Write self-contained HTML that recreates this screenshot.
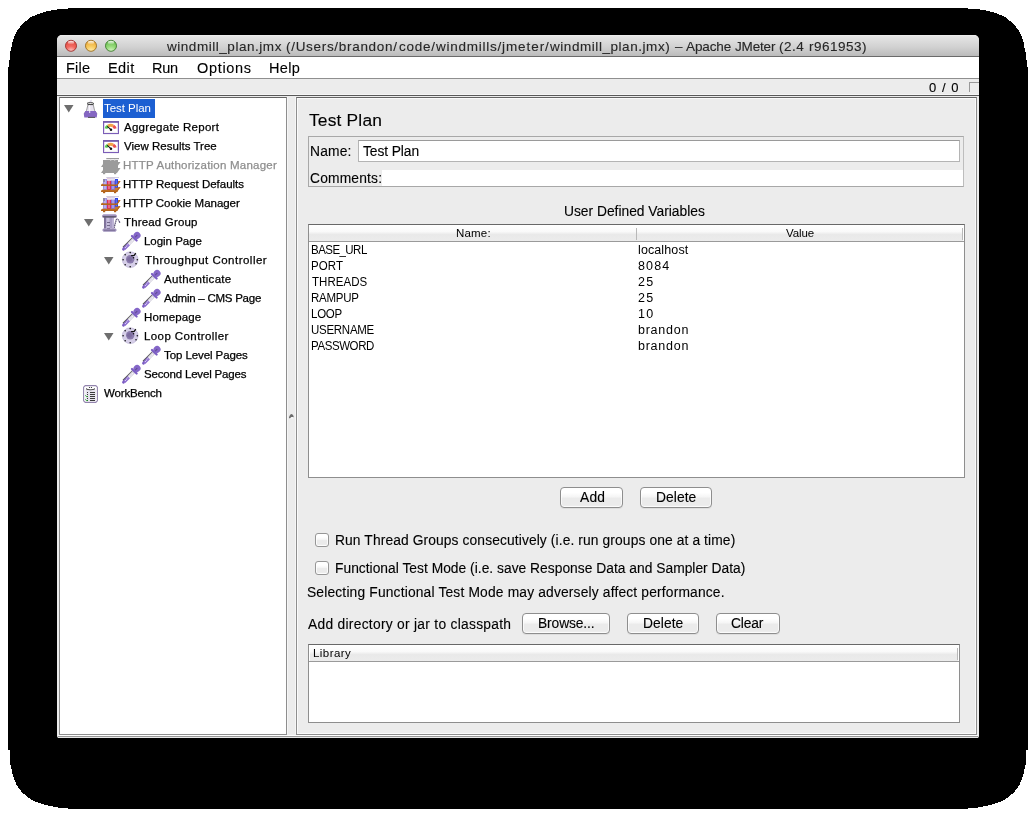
<!DOCTYPE html>
<html><head><meta charset="utf-8">
<style>
*{margin:0;padding:0;box-sizing:border-box}
html,body{width:1036px;height:817px;overflow:hidden;background:#fff;font-family:"Liberation Sans",sans-serif;color:#000}
.a{position:absolute;white-space:nowrap;will-change:transform;-webkit-text-stroke:0.25px currentColor}
.b{position:absolute}
.btn{position:absolute;border:1px solid #8e8e8e;border-radius:4px;background:linear-gradient(#fff,#fff 25%,#f6f6f6 45%,#ebebeb 55%,#ebebeb 90%,#f4f4f4);box-shadow:0 1px 0.5px rgba(0,0,0,0.06), inset 0 0 0 1px rgba(255,255,255,0.7)}
.cb{position:absolute;width:14px;height:14px;border:1px solid #969696;border-radius:3px;background:linear-gradient(#fff,#fff 25%,#f6f6f6 45%,#ebebeb 55%,#ebebeb 85%,#f6f6f6);box-shadow:inset 0 0 0 1px rgba(255,255,255,0.8)}
</style></head><body>
<svg class="b" style="left:0;top:0" width="1036" height="817"><path d="M8 67 L9.4 66.7 L9.5 60 L10.1 53 L11.4 48.1 L12.8 40.3 L14.8 35.4 L16.7 31.5 L19.2 28 L23 23 L26 21 L28.5 19 L31 17 L33 16 L36 15 L38 14 L41 13 L44 12 L48 11 L53 10 L60 9 L76 8 L960 8 L976 9 L983 10 L988 11 L992 12 L995 13 L998 14 L1000 15 L1003 16 L1005 17 L1007.5 19 L1010 21 L1013 23 L1016.8 28 L1019.3 31.5 L1021.2 35.4 L1023.2 40.3 L1024.6 48.1 L1025.9 53 L1026.5 60 L1026.6 66.7 L1028 67 L1028 749.7 L1026 749.7 L1026 763.8 L1025 766 L1023.6 773.5 L1021 781.4 L1018.8 786 L1013.5 793 L1010 795.5 L1004.7 800 L996.8 803 L988 805.6 L975.6 808 L960 809 L76 809 L60.4 808 L48 805.6 L39.2 803 L31.3 800 L26 795.5 L22.5 793 L17.2 786 L15 781.4 L12.4 773.5 L11 766 L10 763.8 L10 749.7 L8 749.7 Z" fill="#000" shape-rendering="crispEdges"/></svg>
<div class="b" style="left:57px;top:35px;width:922px;height:703px;background:#ececec;border-radius:5px 5px 2px 2px"></div>
<div class="b" style="left:57px;top:35px;width:922px;height:21px;border-radius:5px 5px 0 0;background:linear-gradient(#f0f0f0,#e4e4e4 8%,#d2d2d2 55%,#bbbbbb)"></div>
<div class="b" style="left:57px;top:56px;width:922px;height:1px;background:#6a6a6a"></div>
<div class="b" style="left:57px;top:57px;width:922px;height:21px;background:#fff"></div>
<div class="b" style="left:57px;top:78px;width:922px;height:1px;background:#8f8f8f"></div>
<div class="b" style="left:57px;top:94px;width:922px;height:1px;background:#f6f6f6"></div>
<div class="b" style="left:57px;top:95px;width:922px;height:1px;background:#595959"></div>
<!-- traffic lights -->
<svg class="b" style="left:60px;top:35px" width="64" height="22" viewBox="0 0 64 22">
<defs>
<radialGradient id="gr" cx="50%" cy="100%" r="100%"><stop offset="0" stop-color="#fbd2d0"/><stop offset="0.45" stop-color="#f36b62"/><stop offset="1" stop-color="#e0453c"/></radialGradient>
<radialGradient id="gy" cx="50%" cy="100%" r="100%"><stop offset="0" stop-color="#fdf0b8"/><stop offset="0.45" stop-color="#f8cc62"/><stop offset="1" stop-color="#e9a433"/></radialGradient>
<radialGradient id="gg" cx="50%" cy="100%" r="100%"><stop offset="0" stop-color="#dcf6cc"/><stop offset="0.45" stop-color="#98dc7c"/><stop offset="1" stop-color="#62b84a"/></radialGradient>
<linearGradient id="hl" x1="0" y1="0" x2="0" y2="1"><stop offset="0" stop-color="#fff" stop-opacity="0.95"/><stop offset="1" stop-color="#fff" stop-opacity="0.05"/></linearGradient>
</defs>
<circle cx="11" cy="10.8" r="5.5" fill="url(#gr)" stroke="#9c2e2a" stroke-width="0.9"/>
<ellipse cx="11" cy="7.6" rx="3.2" ry="1.9" fill="url(#hl)"/>
<circle cx="31" cy="10.8" r="5.5" fill="url(#gy)" stroke="#9a6c1e" stroke-width="0.9"/>
<ellipse cx="31" cy="7.6" rx="3.2" ry="1.9" fill="url(#hl)"/>
<circle cx="51" cy="10.8" r="5.5" fill="url(#gg)" stroke="#3c7a2c" stroke-width="0.9"/>
<ellipse cx="51" cy="7.6" rx="3.2" ry="1.9" fill="url(#hl)"/>
</svg>
<!-- counter square -->
<div class="b" style="left:969px;top:82px;width:10px;height:10px;border:1px solid #999;border-right:none;border-bottom:none"></div>
<!-- tree panel -->
<div class="b" style="left:59px;top:97px;width:228px;height:638px;background:#fff;border:1px solid #8e8e8e;border-top-color:#646464"></div>
<div class="b" style="left:103px;top:99px;width:52px;height:19px;background:#1c5fd2"></div>
<!-- divider -->
<div class="b" style="left:287px;top:97px;width:1px;height:637px;background:#f6f6f6"></div>
<div class="b" style="left:295px;top:97px;width:1px;height:637px;background:#f6f6f6"></div>
<svg class="b" style="left:288px;top:413px" width="7" height="7" viewBox="0 0 7 7"><path d="M0.9 4.6 Q2.2 0.6 4.2 1.2 Q5.6 2 5.8 4.2 Q4.6 3.6 3.4 4.2 Q2.4 4.6 1.6 5.6 Z" fill="#6c6c6c"/><ellipse cx="4" cy="4.9" rx="1.1" ry="0.8" fill="#fafafa"/></svg>
<!-- bottom window lines -->
<div class="b" style="left:58px;top:735px;width:920px;height:1px;background:#fff"></div>
<div class="b" style="left:58px;top:736px;width:920px;height:1px;background:#999"></div>
<div class="b" style="left:58px;top:737px;width:920px;height:1px;background:#e6e6e6"></div>
<!-- right panel -->
<div class="b" style="left:296px;top:97px;width:681px;height:638px;border:1px solid #8e8e8e;border-top-color:#646464"></div>
<div class="b" style="left:297px;top:98px;width:679px;height:636px;border:1px solid #fafafa"></div>
<!-- name/comments box -->
<div class="b" style="left:308px;top:136px;width:656px;height:51px;border:1px solid #a8a8a8;border-right-color:#bdbdbd;border-bottom-color:#a8a8a8"></div>
<div class="b" style="left:358px;top:140px;width:602px;height:22px;background:#fff;border:1px solid #b4b4b4;border-top-color:#9a9a9a"></div>
<div class="b" style="left:382px;top:170px;width:581px;height:16px;background:#fff"></div>
<!-- variables table -->
<div class="b" style="left:308px;top:224px;width:657px;height:254px;background:#fff;border:1px solid #8e8e8e;border-top-color:#686868"></div>
<div class="b" style="left:309px;top:225px;width:654px;height:16px;background:linear-gradient(#fff,#fafafa 40%,#e9e9e9 60%,#ececec)"></div>
<div class="b" style="left:309px;top:241px;width:655px;height:1px;background:#9a9a9a"></div>
<div class="b" style="left:636px;top:228px;width:1px;height:12px;background:#b8b8b8"></div>
<div class="b" style="left:962px;top:228px;width:1px;height:12px;background:#b8b8b8"></div>
<!-- buttons -->
<div class="btn" style="left:560px;top:487px;width:63px;height:21px"></div>
<div class="btn" style="left:640px;top:487px;width:72px;height:21px"></div>
<div class="cb" style="left:315px;top:533px"></div>
<div class="cb" style="left:315px;top:561px"></div>
<div class="btn" style="left:522px;top:613px;width:88px;height:21px"></div>
<div class="btn" style="left:627px;top:613px;width:72px;height:21px"></div>
<div class="btn" style="left:716px;top:613px;width:64px;height:21px"></div>
<!-- library table -->
<div class="b" style="left:308px;top:644px;width:652px;height:79px;background:#fff;border:1px solid #8e8e8e;border-top-color:#686868"></div>
<div class="b" style="left:310px;top:645px;width:648px;height:16px;background:linear-gradient(#fff,#fafafa 40%,#e9e9e9 60%,#ececec)"></div>
<div class="b" style="left:309px;top:661px;width:650px;height:1px;background:#9a9a9a"></div>
<div class="b" style="left:957px;top:648px;width:1px;height:12px;background:#b8b8b8"></div>
<svg class="a" style="left:64px;top:105px" width="10" height="8" viewBox="0 0 10 8"><path d="M0 0 L9.5 0 L4.75 7.5 Z" fill="#6e6e6e"/></svg>
<svg class="a" style="left:83px;top:99px;overflow:visible" width="15" height="19" viewBox="0 0 15 19">
<path d="M6 4 Q6.5 1 9 0.4 Q8 2 8.8 4 Z" fill="#dad6e6"/>
<path d="M5 5.5 L10.2 5.5 L11.6 11.5 L14 15 L1 15 L3.5 11.5 Z" fill="#e6e2ee" stroke="#777" stroke-width="0.7"/>
<ellipse cx="7.4" cy="4.6" rx="3.4" ry="0.95" fill="#fff" stroke="#333" stroke-width="0.9"/>
<path d="M5 5.6 L10.2 5.6" stroke="#444" stroke-width="0.9"/>
<path d="M2.3 12 L12.7 12 L14.2 15 L13.7 18.6 L1.3 18.6 L0.8 15 Z" fill="#8466c2"/>
<rect x="5" y="17.9" width="7" height="1" fill="#555"/>
<rect x="6.3" y="6" width="0.9" height="8" fill="#fff"/>
</svg>
<svg class="a" style="left:103px;top:121px;overflow:visible" width="16" height="13" viewBox="0 0 16 13">
<rect x="0.6" y="0.9" width="14.8" height="11.6" fill="#fff" stroke="#7b5db8" stroke-width="1.2"/>
<rect x="0" y="0.2" width="16" height="1.4" fill="#6c52a4"/>
<rect x="1.2" y="10.8" width="13.6" height="1.1" fill="#f2f2f2"/>
<path d="M2.97 7.62 A4.7 3.9 0 0 1 4.97 5.07" stroke="#5cc955" stroke-width="2.9" fill="none"/><path d="M4.97 5.07 A4.7 3.9 0 0 1 10.23 5.07" stroke="#f2a347" stroke-width="2.9" fill="none"/><path d="M10.23 5.07 A4.7 3.9 0 0 1 12.23 7.62" stroke="#ee5050" stroke-width="2.9" fill="none"/>
<path d="M4.3 5.4 L7.9 8.7" stroke="#111" stroke-width="1.1"/>
<circle cx="8" cy="8.8" r="1.25" fill="#111"/>
</svg>
<svg class="a" style="left:103px;top:140px;overflow:visible" width="16" height="13" viewBox="0 0 16 13">
<rect x="0.6" y="0.9" width="14.8" height="11.6" fill="#fff" stroke="#7b5db8" stroke-width="1.2"/>
<rect x="0" y="0.2" width="16" height="1.4" fill="#6c52a4"/>
<rect x="1.2" y="10.8" width="13.6" height="1.1" fill="#f2f2f2"/>
<path d="M2.97 7.62 A4.7 3.9 0 0 1 4.97 5.07" stroke="#5cc955" stroke-width="2.9" fill="none"/><path d="M4.97 5.07 A4.7 3.9 0 0 1 10.23 5.07" stroke="#f2a347" stroke-width="2.9" fill="none"/><path d="M10.23 5.07 A4.7 3.9 0 0 1 12.23 7.62" stroke="#ee5050" stroke-width="2.9" fill="none"/>
<path d="M4.3 5.4 L7.9 8.7" stroke="#111" stroke-width="1.1"/>
<circle cx="8" cy="8.8" r="1.25" fill="#111"/>
</svg>
<svg class="a" style="left:100px;top:158px;overflow:visible" width="21" height="17" viewBox="0 0 21 17">
<g fill="#9b9b9b">
<rect x="6.3" y="0" width="12.7" height="1.2"/>
<rect x="3" y="2" width="15" height="11"/>
<path d="M1 9 L17 9 L20.5 4 L4.5 4 Z"/>
<path d="M1 15 L17 15 L20.5 10 L4.5 10 Z"/>
<rect x="3" y="15" width="2.2" height="1.2"/><rect x="14" y="15" width="2.2" height="1.2"/>
</g>
<rect x="10" y="1.3" width="1.3" height="1.3" fill="#ddd"/><rect x="14" y="1.3" width="1.3" height="1.3" fill="#ddd"/>
</svg>
<svg class="a" style="left:100px;top:177px;overflow:visible" width="21" height="17" viewBox="0 0 21 17">
<rect x="6.3" y="0" width="12.7" height="1.1" fill="#cfcbdc"/>
<path d="M1 9 L17 9 L20.5 4 L4.5 4 Z" fill="#c97a2c"/>
<path d="M1 15 L17 15 L20.5 10 L4.5 10 Z" fill="#c97a2c"/>
<rect x="3" y="2" width="4" height="10.7" fill="#9d8ee0"/><rect x="4.5" y="3" width="1" height="9" fill="#d8d0f4"/>
<rect x="3" y="2" width="2" height="3" fill="#8d87a6"/>
<rect x="7" y="1.2" width="4" height="11.5" fill="#da2c5c"/><rect x="8.5" y="2" width="1" height="10" fill="#f2a8bc"/>
<rect x="7" y="1.2" width="4" height="2.6" fill="#e8e4f0"/>
<rect x="11" y="1.2" width="4" height="11.5" fill="#8472d6"/><rect x="12.5" y="3" width="1" height="9" fill="#c8c0f0"/>
<rect x="11" y="1.2" width="4" height="2.4" fill="#e8e4f0"/>
<rect x="15" y="2" width="3" height="8.6" fill="#2c42e2"/><rect x="15.8" y="3" width="0.8" height="7" fill="#7c8cf0"/>
<path d="M1 9 L17 9 L17.9 7.6 L1.2 7.3 Z" fill="#b5651c"/>
<path d="M17 9 L20.5 4 L19.5 4 L16.3 8 Z" fill="#b5651c"/>
<path d="M1 15 L17 15 L17.9 13.6 L1.2 13.3 Z" fill="#b5651c"/>
<path d="M17 15 L20.5 10 L19.5 10 L16.3 14 Z" fill="#b5651c"/>
<rect x="3" y="15" width="2.2" height="1.2" fill="#b0601a"/><rect x="14" y="15" width="2.2" height="1.2" fill="#b0601a"/>
</svg>
<svg class="a" style="left:100px;top:196px;overflow:visible" width="21" height="17" viewBox="0 0 21 17">
<rect x="6.3" y="0" width="12.7" height="1.1" fill="#cfcbdc"/>
<path d="M1 9 L17 9 L20.5 4 L4.5 4 Z" fill="#c97a2c"/>
<path d="M1 15 L17 15 L20.5 10 L4.5 10 Z" fill="#c97a2c"/>
<rect x="3" y="2" width="4" height="10.7" fill="#9d8ee0"/><rect x="4.5" y="3" width="1" height="9" fill="#d8d0f4"/>
<rect x="3" y="2" width="2" height="3" fill="#8d87a6"/>
<rect x="7" y="1.2" width="4" height="11.5" fill="#da2c5c"/><rect x="8.5" y="2" width="1" height="10" fill="#f2a8bc"/>
<rect x="7" y="1.2" width="4" height="2.6" fill="#e8e4f0"/>
<rect x="11" y="1.2" width="4" height="11.5" fill="#8472d6"/><rect x="12.5" y="3" width="1" height="9" fill="#c8c0f0"/>
<rect x="11" y="1.2" width="4" height="2.4" fill="#e8e4f0"/>
<rect x="15" y="2" width="3" height="8.6" fill="#2c42e2"/><rect x="15.8" y="3" width="0.8" height="7" fill="#7c8cf0"/>
<path d="M1 9 L17 9 L17.9 7.6 L1.2 7.3 Z" fill="#b5651c"/>
<path d="M17 9 L20.5 4 L19.5 4 L16.3 8 Z" fill="#b5651c"/>
<path d="M1 15 L17 15 L17.9 13.6 L1.2 13.3 Z" fill="#b5651c"/>
<path d="M17 15 L20.5 10 L19.5 10 L16.3 14 Z" fill="#b5651c"/>
<rect x="3" y="15" width="2.2" height="1.2" fill="#b0601a"/><rect x="14" y="15" width="2.2" height="1.2" fill="#b0601a"/>
</svg>
<svg class="a" style="left:84px;top:219px" width="10" height="8" viewBox="0 0 10 8"><path d="M0 0 L9.5 0 L4.75 7.5 Z" fill="#6e6e6e"/></svg>
<svg class="a" style="left:101px;top:214px;overflow:visible" width="19" height="18" viewBox="0 0 19 18">
<path d="M13 14 L15.3 5.6 Q17 3.8 18.8 8.8" stroke="#5e5478" stroke-width="1.3" fill="none" stroke-dasharray="1.6 0.5"/>
<rect x="3" y="3" width="10" height="11.5" fill="#a99dc6"/>
<rect x="3" y="3" width="1.9" height="11.5" fill="#7d7198"/>
<rect x="5.5" y="3.5" width="3" height="11" fill="#c6bedb"/>
<rect x="11" y="3.5" width="2" height="11" fill="#bcb2d4"/>
<rect x="6" y="8" width="3" height="0.9" fill="#6a6080"/><rect x="6" y="11" width="3" height="0.9" fill="#6a6080"/><rect x="6" y="14" width="3" height="0.9" fill="#6a6080"/>
<path d="M1.2 1.2 L2.5 0.2 L14.5 0.2 L15.8 1.2 L15.8 3.4 L1.2 3.4 Z" fill="#a194bf"/>
<path d="M1.5 2.3 L15.5 2.3 L14.5 3.6 L2.5 3.6 Z" fill="#4e4a5a"/>
<path d="M1.2 16 L2.5 14.5 L14.5 14.5 L15.8 16 L14.5 17.8 L2.5 17.8 Z" fill="#9d90ba"/>
<rect x="3" y="15.8" width="11" height="1" fill="#7d7198"/>
</svg>
<svg class="a" style="left:122px;top:232px;overflow:visible" width="20" height="20" viewBox="0 0 20 20">
<g transform="translate(0.9 17.9) rotate(-45.6)">
<circle cx="0.8" cy="0" r="1.4" fill="#7a5cc2"/>
<rect x="1.5" y="-1.8" width="6.8" height="3.6" fill="#8a6ad0"/>
<rect x="8.3" y="-1.8" width="7.4" height="3.6" fill="#d9d5e2"/>
<rect x="3" y="-0.5" width="0.9" height="1" fill="#fff"/><rect x="4.8" y="-0.5" width="0.9" height="1" fill="#fff"/><rect x="6.6" y="-0.5" width="0.9" height="1" fill="#fff"/><rect x="9" y="-0.3" width="1" height="1.2" fill="#fff"/><rect x="10.8" y="-0.3" width="1" height="1.2" fill="#fff"/><rect x="12.6" y="-0.3" width="1" height="1.2" fill="#fff"/>
<rect x="2" y="-2.3" width="13.6" height="0.8" fill="#555"/>
<rect x="15.2" y="-4.3" width="2.2" height="8.6" rx="1" fill="#7a5cc2"/>
<ellipse cx="20.2" cy="0" rx="3.6" ry="3.4" fill="#8466c8"/>
<rect x="17.6" y="-0.6" width="3" height="1" fill="#5e4a8e"/>
</g>
</svg>
<svg class="a" style="left:104px;top:257px" width="10" height="8" viewBox="0 0 10 8"><path d="M0 0 L9.5 0 L4.75 7.5 Z" fill="#6e6e6e"/></svg>
<svg class="a" style="left:122px;top:252px;overflow:visible" width="17" height="17" viewBox="0 0 17 17">
<circle cx="8.2" cy="7.7" r="7.9" fill="#d6cfe8"/>
<circle cx="8.2" cy="7.7" r="7.9" fill="none" stroke="#b8aed4" stroke-width="0.6"/>
<circle cx="8.2" cy="7.3" r="4.2" fill="#8a7aac"/>
<circle cx="7.6" cy="7.3" r="2.4" fill="#7c6c9e"/>
<circle cx="8.20" cy="0.60" r="0.8" fill="#111"/><circle cx="3.18" cy="2.68" r="0.8" fill="#111"/><circle cx="1.10" cy="7.70" r="0.8" fill="#111"/><circle cx="3.18" cy="12.72" r="0.8" fill="#111"/><circle cx="8.20" cy="14.80" r="0.8" fill="#111"/><circle cx="14.02" cy="11.77" r="0.8" fill="#111"/><circle cx="15.30" cy="7.70" r="0.8" fill="#111"/><circle cx="11.5" cy="5.7" r="0.8" fill="#111"/>
<path d="M9.1 3.6 L12.2 3.3 L13.8 1.1" stroke="#111" stroke-width="1.3" fill="none"/>
</svg>
<svg class="a" style="left:142px;top:270px;overflow:visible" width="20" height="20" viewBox="0 0 20 20">
<g transform="translate(0.9 17.9) rotate(-45.6)">
<circle cx="0.8" cy="0" r="1.4" fill="#7a5cc2"/>
<rect x="1.5" y="-1.8" width="6.8" height="3.6" fill="#8a6ad0"/>
<rect x="8.3" y="-1.8" width="7.4" height="3.6" fill="#d9d5e2"/>
<rect x="3" y="-0.5" width="0.9" height="1" fill="#fff"/><rect x="4.8" y="-0.5" width="0.9" height="1" fill="#fff"/><rect x="6.6" y="-0.5" width="0.9" height="1" fill="#fff"/><rect x="9" y="-0.3" width="1" height="1.2" fill="#fff"/><rect x="10.8" y="-0.3" width="1" height="1.2" fill="#fff"/><rect x="12.6" y="-0.3" width="1" height="1.2" fill="#fff"/>
<rect x="2" y="-2.3" width="13.6" height="0.8" fill="#555"/>
<rect x="15.2" y="-4.3" width="2.2" height="8.6" rx="1" fill="#7a5cc2"/>
<ellipse cx="20.2" cy="0" rx="3.6" ry="3.4" fill="#8466c8"/>
<rect x="17.6" y="-0.6" width="3" height="1" fill="#5e4a8e"/>
</g>
</svg>
<svg class="a" style="left:142px;top:289px;overflow:visible" width="20" height="20" viewBox="0 0 20 20">
<g transform="translate(0.9 17.9) rotate(-45.6)">
<circle cx="0.8" cy="0" r="1.4" fill="#7a5cc2"/>
<rect x="1.5" y="-1.8" width="6.8" height="3.6" fill="#8a6ad0"/>
<rect x="8.3" y="-1.8" width="7.4" height="3.6" fill="#d9d5e2"/>
<rect x="3" y="-0.5" width="0.9" height="1" fill="#fff"/><rect x="4.8" y="-0.5" width="0.9" height="1" fill="#fff"/><rect x="6.6" y="-0.5" width="0.9" height="1" fill="#fff"/><rect x="9" y="-0.3" width="1" height="1.2" fill="#fff"/><rect x="10.8" y="-0.3" width="1" height="1.2" fill="#fff"/><rect x="12.6" y="-0.3" width="1" height="1.2" fill="#fff"/>
<rect x="2" y="-2.3" width="13.6" height="0.8" fill="#555"/>
<rect x="15.2" y="-4.3" width="2.2" height="8.6" rx="1" fill="#7a5cc2"/>
<ellipse cx="20.2" cy="0" rx="3.6" ry="3.4" fill="#8466c8"/>
<rect x="17.6" y="-0.6" width="3" height="1" fill="#5e4a8e"/>
</g>
</svg>
<svg class="a" style="left:122px;top:308px;overflow:visible" width="20" height="20" viewBox="0 0 20 20">
<g transform="translate(0.9 17.9) rotate(-45.6)">
<circle cx="0.8" cy="0" r="1.4" fill="#7a5cc2"/>
<rect x="1.5" y="-1.8" width="6.8" height="3.6" fill="#8a6ad0"/>
<rect x="8.3" y="-1.8" width="7.4" height="3.6" fill="#d9d5e2"/>
<rect x="3" y="-0.5" width="0.9" height="1" fill="#fff"/><rect x="4.8" y="-0.5" width="0.9" height="1" fill="#fff"/><rect x="6.6" y="-0.5" width="0.9" height="1" fill="#fff"/><rect x="9" y="-0.3" width="1" height="1.2" fill="#fff"/><rect x="10.8" y="-0.3" width="1" height="1.2" fill="#fff"/><rect x="12.6" y="-0.3" width="1" height="1.2" fill="#fff"/>
<rect x="2" y="-2.3" width="13.6" height="0.8" fill="#555"/>
<rect x="15.2" y="-4.3" width="2.2" height="8.6" rx="1" fill="#7a5cc2"/>
<ellipse cx="20.2" cy="0" rx="3.6" ry="3.4" fill="#8466c8"/>
<rect x="17.6" y="-0.6" width="3" height="1" fill="#5e4a8e"/>
</g>
</svg>
<svg class="a" style="left:104px;top:333px" width="10" height="8" viewBox="0 0 10 8"><path d="M0 0 L9.5 0 L4.75 7.5 Z" fill="#6e6e6e"/></svg>
<svg class="a" style="left:122px;top:328px;overflow:visible" width="17" height="17" viewBox="0 0 17 17">
<circle cx="8.2" cy="7.7" r="7.9" fill="#d6cfe8"/>
<circle cx="8.2" cy="7.7" r="7.9" fill="none" stroke="#b8aed4" stroke-width="0.6"/>
<circle cx="8.2" cy="7.3" r="4.2" fill="#8a7aac"/>
<circle cx="7.6" cy="7.3" r="2.4" fill="#7c6c9e"/>
<circle cx="8.20" cy="0.60" r="0.8" fill="#111"/><circle cx="3.18" cy="2.68" r="0.8" fill="#111"/><circle cx="1.10" cy="7.70" r="0.8" fill="#111"/><circle cx="3.18" cy="12.72" r="0.8" fill="#111"/><circle cx="8.20" cy="14.80" r="0.8" fill="#111"/><circle cx="14.02" cy="11.77" r="0.8" fill="#111"/><circle cx="15.30" cy="7.70" r="0.8" fill="#111"/><circle cx="11.5" cy="5.7" r="0.8" fill="#111"/>
<path d="M9.1 3.6 L12.2 3.3 L13.8 1.1" stroke="#111" stroke-width="1.3" fill="none"/>
</svg>
<svg class="a" style="left:142px;top:346px;overflow:visible" width="20" height="20" viewBox="0 0 20 20">
<g transform="translate(0.9 17.9) rotate(-45.6)">
<circle cx="0.8" cy="0" r="1.4" fill="#7a5cc2"/>
<rect x="1.5" y="-1.8" width="6.8" height="3.6" fill="#8a6ad0"/>
<rect x="8.3" y="-1.8" width="7.4" height="3.6" fill="#d9d5e2"/>
<rect x="3" y="-0.5" width="0.9" height="1" fill="#fff"/><rect x="4.8" y="-0.5" width="0.9" height="1" fill="#fff"/><rect x="6.6" y="-0.5" width="0.9" height="1" fill="#fff"/><rect x="9" y="-0.3" width="1" height="1.2" fill="#fff"/><rect x="10.8" y="-0.3" width="1" height="1.2" fill="#fff"/><rect x="12.6" y="-0.3" width="1" height="1.2" fill="#fff"/>
<rect x="2" y="-2.3" width="13.6" height="0.8" fill="#555"/>
<rect x="15.2" y="-4.3" width="2.2" height="8.6" rx="1" fill="#7a5cc2"/>
<ellipse cx="20.2" cy="0" rx="3.6" ry="3.4" fill="#8466c8"/>
<rect x="17.6" y="-0.6" width="3" height="1" fill="#5e4a8e"/>
</g>
</svg>
<svg class="a" style="left:122px;top:365px;overflow:visible" width="20" height="20" viewBox="0 0 20 20">
<g transform="translate(0.9 17.9) rotate(-45.6)">
<circle cx="0.8" cy="0" r="1.4" fill="#7a5cc2"/>
<rect x="1.5" y="-1.8" width="6.8" height="3.6" fill="#8a6ad0"/>
<rect x="8.3" y="-1.8" width="7.4" height="3.6" fill="#d9d5e2"/>
<rect x="3" y="-0.5" width="0.9" height="1" fill="#fff"/><rect x="4.8" y="-0.5" width="0.9" height="1" fill="#fff"/><rect x="6.6" y="-0.5" width="0.9" height="1" fill="#fff"/><rect x="9" y="-0.3" width="1" height="1.2" fill="#fff"/><rect x="10.8" y="-0.3" width="1" height="1.2" fill="#fff"/><rect x="12.6" y="-0.3" width="1" height="1.2" fill="#fff"/>
<rect x="2" y="-2.3" width="13.6" height="0.8" fill="#555"/>
<rect x="15.2" y="-4.3" width="2.2" height="8.6" rx="1" fill="#7a5cc2"/>
<ellipse cx="20.2" cy="0" rx="3.6" ry="3.4" fill="#8466c8"/>
<rect x="17.6" y="-0.6" width="3" height="1" fill="#5e4a8e"/>
</g>
</svg>
<svg class="a" style="left:83px;top:384px;overflow:visible" width="16" height="19" viewBox="0 0 16 19">
<path d="M2.2 1.6 L12.8 1.6 L14.4 3.2 L14.4 16.8 L12.8 18.4 L2.2 18.4 L0.6 16.8 L0.6 3.2 Z" fill="#fff" stroke="#9284ad" stroke-width="1.1"/>
<rect x="2.5" y="5.5" width="10.2" height="11.5" fill="#e6e2ee"/>
<path d="M3 4.3 Q7.5 6.8 12 4.3 L12 5.3 Q7.5 7.2 3 5.3 Z" fill="#222"/>
<circle cx="6.5" cy="3.5" r="0.6" fill="#222"/><circle cx="8.5" cy="3.5" r="0.6" fill="#222"/>
<rect x="4" y="8" width="1" height="1" fill="#333"/><rect x="7" y="8" width="5" height="1" fill="#3a3a3a"/><rect x="4" y="10" width="1" height="1" fill="#333"/><rect x="7" y="10" width="5" height="1" fill="#3a3a3a"/><rect x="4" y="12" width="1" height="1" fill="#333"/><rect x="7" y="12" width="5" height="1" fill="#3a3a3a"/><rect x="4" y="14" width="1" height="1" fill="#333"/><rect x="7" y="14" width="5" height="1" fill="#3a3a3a"/><rect x="4" y="16" width="1" height="1" fill="#333"/><rect x="7" y="16" width="5" height="1" fill="#3a3a3a"/>
<path d="M2.3 11.4 L3.6 12.6 L4.6 12.6" stroke="#22b022" stroke-width="1" fill="none"/>
<path d="M2.3 15.4 L3.6 16.6 L4.6 16.6" stroke="#22b022" stroke-width="1" fill="none"/>
</svg>
<div class="a" style="left:167.3px;top:40px;font-size:13.5px;line-height:13.5px;letter-spacing:0.537px;color:#262626;-webkit-text-stroke:0.12px currentColor;">windmill_plan.jmx</div>
<div class="a" style="left:285.9px;top:40px;font-size:13.5px;line-height:13.5px;letter-spacing:0.693px;color:#262626;-webkit-text-stroke:0.12px currentColor;">(/Users/brandon/</div>
<div class="a" style="left:399.0px;top:40px;font-size:13.5px;line-height:13.5px;letter-spacing:0.771px;color:#262626;-webkit-text-stroke:0.12px currentColor;">code/windmills/</div>
<div class="a" style="left:502.3px;top:40px;font-size:13.5px;line-height:13.5px;letter-spacing:0.933px;color:#262626;-webkit-text-stroke:0.12px currentColor;">jmeter/</div>
<div class="a" style="left:550.1px;top:40px;font-size:13.5px;line-height:13.5px;letter-spacing:0.553px;color:#262626;-webkit-text-stroke:0.12px currentColor;">windmill_plan.jmx)</div>
<div class="a" style="left:674.5px;top:40px;font-size:13.5px;line-height:13.5px;letter-spacing:0px;color:#262626;-webkit-text-stroke:0.12px currentColor;">–</div>
<div class="a" style="left:685.8px;top:40px;font-size:13.5px;line-height:13.5px;letter-spacing:-0.1px;color:#262626;-webkit-text-stroke:0.12px currentColor;">Apache</div>
<div class="a" style="left:735.4px;top:40px;font-size:13.5px;line-height:13.5px;letter-spacing:-0.16px;color:#262626;-webkit-text-stroke:0.12px currentColor;">JMeter</div>
<div class="a" style="left:779.2px;top:40px;font-size:13.5px;line-height:13.5px;letter-spacing:0.466px;color:#262626;-webkit-text-stroke:0.12px currentColor;">(2.4</div>
<div class="a" style="left:809.3px;top:40px;font-size:13.5px;line-height:13.5px;letter-spacing:0.485px;color:#262626;-webkit-text-stroke:0.12px currentColor;">r961953)</div>
<div class="a" style="left:65.8px;top:61px;font-size:14.5px;line-height:14.5px;letter-spacing:0.201px;color:#000;-webkit-text-stroke:0.12px currentColor;">File</div>
<div class="a" style="left:107.6px;top:61px;font-size:14.5px;line-height:14.5px;letter-spacing:0.4px;color:#000;-webkit-text-stroke:0.12px currentColor;">Edit</div>
<div class="a" style="left:152.0px;top:61px;font-size:14.5px;line-height:14.5px;letter-spacing:-0.3px;color:#000;-webkit-text-stroke:0.12px currentColor;">Run</div>
<div class="a" style="left:196.5px;top:61px;font-size:14.5px;line-height:14.5px;letter-spacing:0.684px;color:#000;-webkit-text-stroke:0.12px currentColor;">Options</div>
<div class="a" style="left:268.9px;top:61px;font-size:14.5px;line-height:14.5px;letter-spacing:0.333px;color:#000;-webkit-text-stroke:0.12px currentColor;">Help</div>
<div class="a" style="left:929.0px;top:81px;font-size:13px;line-height:13px;letter-spacing:1.05px;color:#000;-webkit-text-stroke:0.12px currentColor;">0 / 0</div>
<div class="a" style="left:104.0px;top:103px;font-size:11.5px;line-height:11.5px;letter-spacing:-0.039px;color:#fff;-webkit-text-stroke:0;">Test Plan</div>
<div class="a" style="left:124.3px;top:122px;font-size:11.5px;line-height:11.5px;letter-spacing:0.274px;color:#000;">Aggregate Report</div>
<div class="a" style="left:124.3px;top:141px;font-size:11.5px;line-height:11.5px;letter-spacing:0.018px;color:#000;">View Results Tree</div>
<div class="a" style="left:123.3px;top:160px;font-size:11.5px;line-height:11.5px;letter-spacing:0.228px;color:#8e8e8e;">HTTP Authorization Manager</div>
<div class="a" style="left:123.4px;top:179px;font-size:11.5px;line-height:11.5px;letter-spacing:-0.01px;color:#000;">HTTP Request Defaults</div>
<div class="a" style="left:123.4px;top:198px;font-size:11.5px;line-height:11.5px;letter-spacing:-0.033px;color:#000;">HTTP Cookie Manager</div>
<div class="a" style="left:124.4px;top:217px;font-size:11.5px;line-height:11.5px;letter-spacing:0.164px;color:#000;">Thread Group</div>
<div class="a" style="left:143.7px;top:236px;font-size:11.5px;line-height:11.5px;letter-spacing:-0.033px;color:#000;">Login Page</div>
<div class="a" style="left:144.7px;top:255px;font-size:11.5px;line-height:11.5px;letter-spacing:0.49px;color:#000;">Throughput Controller</div>
<div class="a" style="left:164.4px;top:274px;font-size:11.5px;line-height:11.5px;letter-spacing:0.3px;color:#000;">Authenticate</div>
<div class="a" style="left:164.4px;top:293px;font-size:11.5px;line-height:11.5px;letter-spacing:-0.246px;color:#000;">Admin – CMS Page</div>
<div class="a" style="left:143.7px;top:312px;font-size:11.5px;line-height:11.5px;letter-spacing:0.143px;color:#000;">Homepage</div>
<div class="a" style="left:143.7px;top:331px;font-size:11.5px;line-height:11.5px;letter-spacing:0.413px;color:#000;">Loop Controller</div>
<div class="a" style="left:164.4px;top:350px;font-size:11.5px;line-height:11.5px;letter-spacing:-0.086px;color:#000;">Top Level Pages</div>
<div class="a" style="left:143.7px;top:369px;font-size:11.5px;line-height:11.5px;letter-spacing:-0.182px;color:#000;">Second Level Pages</div>
<div class="a" style="left:104.1px;top:388px;font-size:11.5px;line-height:11.5px;letter-spacing:-0.161px;color:#000;">WorkBench</div>
<div class="a" style="left:308.5px;top:112px;font-size:17.4px;line-height:17.4px;letter-spacing:0.175px;color:#000;-webkit-text-stroke:0.12px currentColor;">Test Plan</div>
<div class="a" style="left:309.5px;top:145px;font-size:13.8px;line-height:13.8px;letter-spacing:0.175px;color:#000;-webkit-text-stroke:0.12px currentColor;">Name:</div>
<div class="a" style="left:363.0px;top:145px;font-size:13.8px;line-height:13.8px;letter-spacing:-0.086px;color:#000;-webkit-text-stroke:0.12px currentColor;">Test Plan</div>
<div class="a" style="left:309.5px;top:172px;font-size:13.8px;line-height:13.8px;letter-spacing:0.188px;color:#000;-webkit-text-stroke:0.12px currentColor;">Comments:</div>
<div class="a" style="left:564.4px;top:205px;font-size:13.8px;line-height:13.8px;letter-spacing:0.0px;color:#000;-webkit-text-stroke:0.12px currentColor;">User Defined Variables</div>
<div class="a" style="left:456.3px;top:228px;font-size:11.5px;line-height:11.5px;letter-spacing:0.175px;color:#000;-webkit-text-stroke:0;">Name:</div>
<div class="a" style="left:786.4px;top:228px;font-size:11.5px;line-height:11.5px;letter-spacing:-0.1px;color:#000;-webkit-text-stroke:0;">Value</div>
<div class="a" style="left:310.6px;top:245px;font-size:11.5px;line-height:11.5px;letter-spacing:-0.543px;color:#000;transform:scaleY(1.12);transform-origin:0 9px;-webkit-text-stroke:0;">BASE_URL</div>
<div class="a" style="left:310.6px;top:261px;font-size:11.5px;line-height:11.5px;letter-spacing:0.066px;color:#000;transform:scaleY(1.12);transform-origin:0 9px;-webkit-text-stroke:0;">PORT</div>
<div class="a" style="left:311.6px;top:277px;font-size:11.5px;line-height:11.5px;letter-spacing:0.034px;color:#000;transform:scaleY(1.12);transform-origin:0 9px;-webkit-text-stroke:0;">THREADS</div>
<div class="a" style="left:310.6px;top:293px;font-size:11.5px;line-height:11.5px;letter-spacing:-0.24px;color:#000;transform:scaleY(1.12);transform-origin:0 9px;-webkit-text-stroke:0;">RAMPUP</div>
<div class="a" style="left:310.6px;top:309px;font-size:11.5px;line-height:11.5px;letter-spacing:-0.267px;color:#000;transform:scaleY(1.12);transform-origin:0 9px;-webkit-text-stroke:0;">LOOP</div>
<div class="a" style="left:310.6px;top:325px;font-size:11.5px;line-height:11.5px;letter-spacing:-0.272px;color:#000;transform:scaleY(1.12);transform-origin:0 9px;-webkit-text-stroke:0;">USERNAME</div>
<div class="a" style="left:310.6px;top:341px;font-size:11.5px;line-height:11.5px;letter-spacing:-0.414px;color:#000;transform:scaleY(1.12);transform-origin:0 9px;-webkit-text-stroke:0;">PASSWORD</div>
<div class="a" style="left:637.7px;top:244px;font-size:12.5px;line-height:12.5px;letter-spacing:0.111px;color:#000;-webkit-text-stroke:0;">localhost</div>
<div class="a" style="left:637.7px;top:260px;font-size:12.5px;line-height:12.5px;letter-spacing:1.167px;color:#000;-webkit-text-stroke:0;">8084</div>
<div class="a" style="left:637.7px;top:276px;font-size:12.5px;line-height:12.5px;letter-spacing:1.3px;color:#000;-webkit-text-stroke:0;">25</div>
<div class="a" style="left:637.7px;top:292px;font-size:12.5px;line-height:12.5px;letter-spacing:1.3px;color:#000;-webkit-text-stroke:0;">25</div>
<div class="a" style="left:637.7px;top:308px;font-size:12.5px;line-height:12.5px;letter-spacing:1.3px;color:#000;-webkit-text-stroke:0;">10</div>
<div class="a" style="left:637.7px;top:324px;font-size:12.5px;line-height:12.5px;letter-spacing:0.75px;color:#000;-webkit-text-stroke:0;">brandon</div>
<div class="a" style="left:637.7px;top:340px;font-size:12.5px;line-height:12.5px;letter-spacing:0.75px;color:#000;-webkit-text-stroke:0;">brandon</div>
<div class="a" style="left:579.6px;top:491px;font-size:13.8px;line-height:13.8px;letter-spacing:0.2px;color:#000;-webkit-text-stroke:0.12px currentColor;">Add</div>
<div class="a" style="left:655.7px;top:491px;font-size:13.8px;line-height:13.8px;letter-spacing:0.08px;color:#000;-webkit-text-stroke:0.12px currentColor;">Delete</div>
<div class="a" style="left:334.6px;top:534px;font-size:13.8px;line-height:13.8px;letter-spacing:0.114px;color:#000;-webkit-text-stroke:0.12px currentColor;">Run Thread Groups consecutively (i.e. run groups one at a time)</div>
<div class="a" style="left:334.6px;top:562px;font-size:13.8px;line-height:13.8px;letter-spacing:0.018px;color:#000;-webkit-text-stroke:0.12px currentColor;">Functional Test Mode (i.e. save Response Data and Sampler Data)</div>
<div class="a" style="left:307.4px;top:586px;font-size:13.8px;line-height:13.8px;letter-spacing:0.172px;color:#000;-webkit-text-stroke:0.12px currentColor;">Selecting Functional Test Mode may adversely affect performance.</div>
<div class="a" style="left:308.0px;top:618px;font-size:13.8px;line-height:13.8px;letter-spacing:0.281px;color:#000;-webkit-text-stroke:0.12px currentColor;">Add directory or jar to classpath</div>
<div class="a" style="left:537.5px;top:617px;font-size:13.8px;line-height:13.8px;letter-spacing:-0.111px;color:#000;-webkit-text-stroke:0.12px currentColor;">Browse...</div>
<div class="a" style="left:642.6px;top:617px;font-size:13.8px;line-height:13.8px;letter-spacing:0.08px;color:#000;-webkit-text-stroke:0.12px currentColor;">Delete</div>
<div class="a" style="left:731.3px;top:617px;font-size:13.8px;line-height:13.8px;letter-spacing:-0.15px;color:#000;-webkit-text-stroke:0.12px currentColor;">Clear</div>
<div class="a" style="left:312.5px;top:648px;font-size:11.5px;line-height:11.5px;letter-spacing:0.433px;color:#000;-webkit-text-stroke:0;">Library</div>
</body></html>
